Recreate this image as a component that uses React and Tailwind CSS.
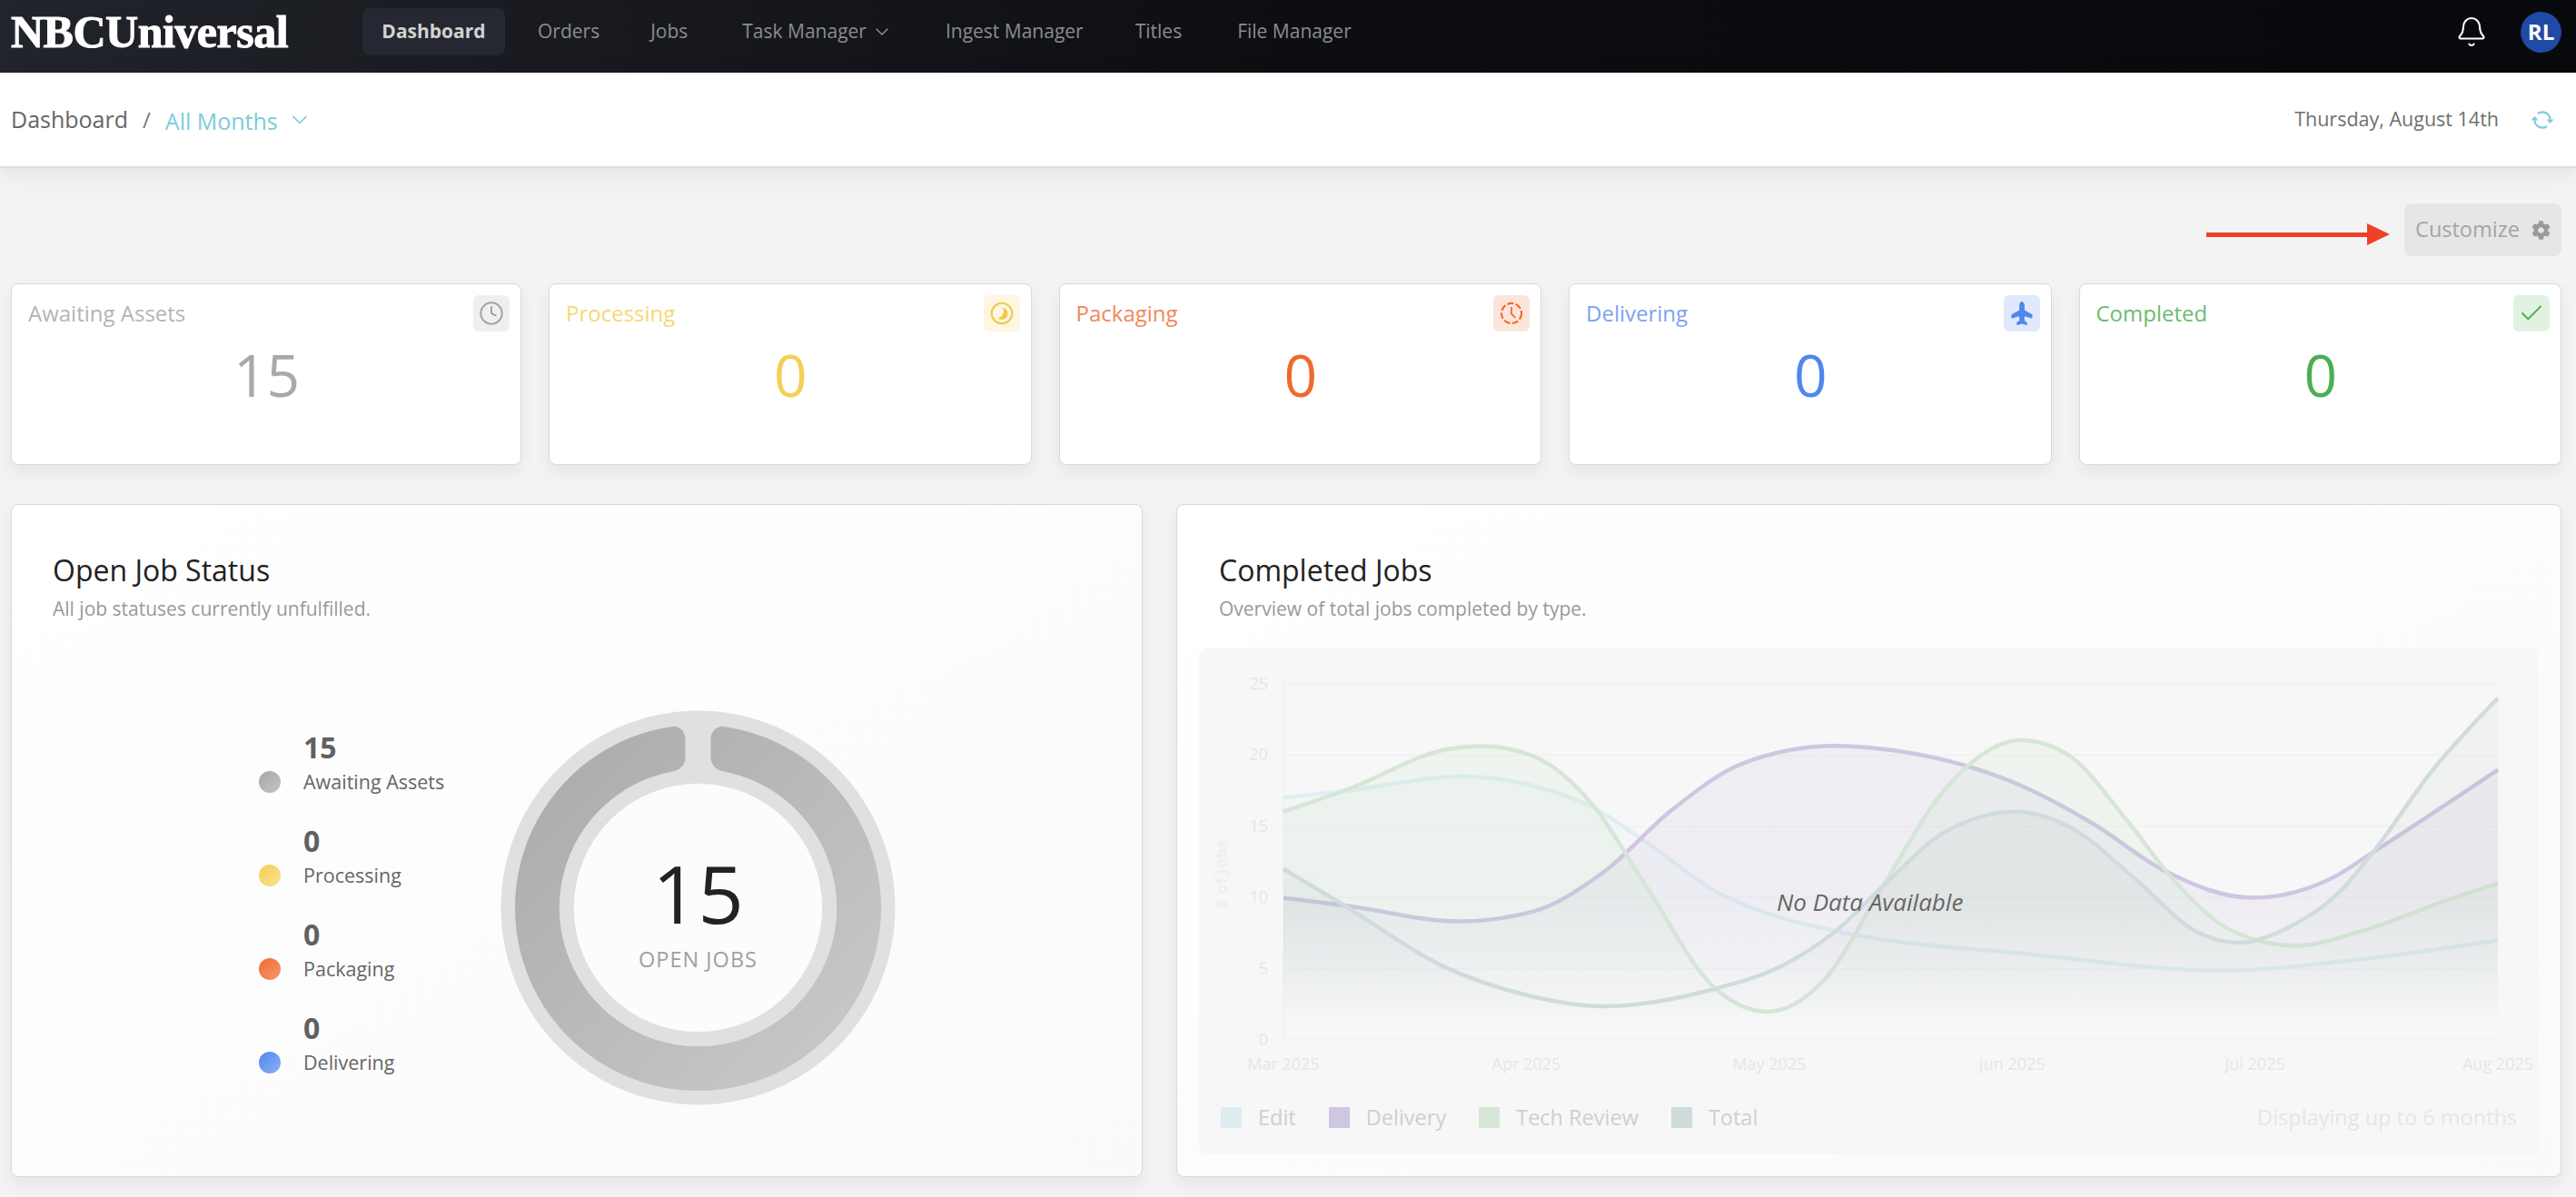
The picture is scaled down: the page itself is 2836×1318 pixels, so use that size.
import React from "react";
import { Bell, ChevronDown, Clock, Check } from "lucide-react";
import { FaCog, FaPlane } from "react-icons/fa";

// monotone curve through the traced points, same as the chart lib draws
const smooth = (pts) => {
  const n = pts.length;
  const h = [];
  const s = [];
  for (let i = 0; i < n - 1; i++) {
    h[i] = pts[i + 1][0] - pts[i][0];
    s[i] = (pts[i + 1][1] - pts[i][1]) / h[i];
  }
  const t = [];
  for (let i = 1; i < n - 1; i++) {
    const p = (s[i - 1] * h[i] + s[i] * h[i - 1]) / (h[i - 1] + h[i]);
    t[i] = (Math.sign(s[i - 1]) + Math.sign(s[i])) * Math.min(Math.abs(s[i - 1]), Math.abs(s[i]), 0.5 * Math.abs(p));
  }
  t[0] = (3 * s[0] - t[1]) / 2;
  t[n - 1] = (3 * s[n - 2] - t[n - 2]) / 2;
  let d = `M${pts[0][0]},${pts[0][1]}`;
  for (let i = 0; i < n - 1; i++) {
    const k = h[i] / 3;
    d += ` C${pts[i][0] + k},${pts[i][1] + k * t[i]} ${pts[i + 1][0] - k},${pts[i + 1][1] - k * t[i + 1]} ${pts[i + 1][0]},${pts[i + 1][1]}`;
  }
  return d;
};

// traced curves, in px from the top left of the plot
const series = [
  {
    id: "edit",
    stroke: "#e0eef2",
    fill: "#bfe3ec",
    alpha: 0.07,
    pts: [[0, 125.6], [71, 117.5], [198.6, 102], [275, 112.2], [341.5, 136.6], [395, 171.2], [479, 230.2], [545.6, 256.7], [606.8, 272], [827, 298.2], [1031, 315.7], [1184, 303.5], [1337, 282.3]],
  },
  {
    id: "delivery",
    stroke: "#cfc6e2",
    fill: "#a08cc8",
    alpha: 0.09,
    pts: [[0, 235.5], [71, 244.5], [193.5, 261.5], [275, 250.6], [351.7, 207.8], [428, 138.6], [505, 87.8], [607, 68.2], [674, 73.5], [817, 114.2], [893, 155], [970, 205.8], [1067, 235.5], [1154, 214], [1199.5, 185.4], [1337, 94.7]],
  },
  {
    id: "tech",
    stroke: "#d5e6d6",
    fill: "#a8d4a8",
    alpha: 0.1,
    pts: [[0, 140.7], [71, 116], [183, 71.5], [219, 68.6], [275, 79.6], [341.5, 134.6], [397.6, 220], [474, 334], [533, 360.9], [591.5, 330], [664, 216], [720, 126.4], [761, 83.7], [812, 62], [863, 77.6], [929, 150.8], [980, 216], [1046.5, 273], [1115, 288.4], [1184, 273], [1286, 236.3], [1337, 220]],
  },
  {
    id: "total",
    stroke: "#d0dcdc",
    fill: "#8f9ca0",
    alpha: 0.07,
    pts: [[0, 203.8], [71, 246.5], [173, 309.6], [265, 342], [351.7, 355], [474, 336], [550.7, 309.6], [607, 273], [663, 220], [725, 165], [806.7, 140.7], [868, 159], [939, 216], [1005.6, 273], [1051.6, 285], [1113, 264.8], [1164, 228], [1199.5, 185.4], [1266, 94], [1337, 15.7]],
  },
];

const stats = [
  { label: "Awaiting Assets", value: 15, title: "text-[#b4b4b4]", num: "text-[#a9a9a9]", box: "bg-[#efefef]", kind: "clock" },
  { label: "Processing", value: 0, title: "text-[#f7d774]", num: "text-[#f5cf55]", box: "bg-[#fdf6e1]", kind: "progress" },
  { label: "Packaging", value: 0, title: "text-[#f2875a]", num: "text-[#ee6a2d]", box: "bg-[#fce5da]", kind: "dashed" },
  { label: "Delivering", value: 0, title: "text-[#7ba3ef]", num: "text-[#4f87ee]", box: "bg-[#e0e9fb]", kind: "plane" },
  { label: "Completed", value: 0, title: "text-[#6dbb70]", num: "text-[#4caf50]", box: "bg-[#e1f1e2]", kind: "check" },
];

const StatIcon = ({ kind }) => {
  if (kind === "clock") return <Clock className="w-[28px] h-[28px] text-[#a3a3a3]" strokeWidth={1.7} />;
  if (kind === "check") return <Check className="w-[30px] h-[30px] text-[#4caf50]" strokeWidth={1.5} />;
  if (kind === "plane") return <FaPlane className="w-[26px] h-[26px] text-[#4f87ee] -rotate-90" />;
  if (kind === "progress") {
    return (
      <svg viewBox="0 0 24 24" className="w-[26px] h-[26px] text-[#f2c94c]" fill="none" stroke="currentColor" strokeWidth="2">
        <circle cx="12" cy="12" r="10.4" />
        <path d="M12.6 6A6.2 6.2 0 1 1 7.8 16.8 7 7 0 0 0 12.6 6z" fill="currentColor" stroke="none" />
      </svg>
    );
  }
  return (
    <svg viewBox="0 0 24 24" className="w-[26px] h-[26px] text-[#ee6a2d]" fill="none" stroke="currentColor" strokeWidth="2">
      <circle cx="12" cy="12" r="10.2" strokeDasharray="6.5 2.2" />
      <path d="M12 6v6.5l3.5 3.5" strokeLinecap="round" strokeWidth="1.6" />
    </svg>
  );
};

const StatCard = ({ s }) => (
  <div className="relative h-[200px] bg-white border border-[#d9d9d9] rounded-lg shadow-[0_8px_18px_rgba(0,0,0,0.06)] pl-[18px] pr-[17px] pt-[16px]">
    <div className={`text-[24px] leading-[32px] ${s.title}`}>{s.label}</div>
    <div className={`text-center text-[64px] leading-[80px] mt-[12px] ${s.num}`}>{s.value}</div>
    <div className={`absolute top-[12px] right-[12px] w-[40px] h-[40px] rounded-md flex items-center justify-center ${s.box}`}>
      <StatIcon kind={s.kind} />
    </div>
  </div>
);

const legend = [
  { label: "Awaiting Assets", value: 15, dot: "from-[#a6a6a6] to-[#c4c4c4]" },
  { label: "Processing", value: 0, dot: "from-[#f5cf55] to-[#f9e08e]" },
  { label: "Packaging", value: 0, dot: "from-[#ee6a2d] to-[#f49a6c]" },
  { label: "Delivering", value: 0, dot: "from-[#4f87ee] to-[#8cb1f5]" },
];

const Donut = () => (
  <div className="relative w-[435px] h-[435px]">
    <svg viewBox="-218 -218 436 436" className="w-full h-full">
      <defs>
        <linearGradient id="ring" x1="0" y1="0" x2="1" y2="1">
          <stop offset="0" stopColor="#a9a9a9" />
          <stop offset="1" stopColor="#cbcbcb" />
        </linearGradient>
      </defs>
      <circle r="217.5" fill="#e0e0e0" />
      <circle r="137" fill="#fcfcfc" />
      <path
        fill="url(#ring)"
        d="M26,-200.3 A202,202 0 1 1 -26,-200.3 Q-14.5,-198 -14,-186 L-14,-166 Q-14,-155 -26,-150.8 A153,153 0 1 0 26,-150.8 Q14,-155 14,-166 L14,-186 Q14.5,-198 26,-200.3 Z"
      />
    </svg>
    <div className="absolute inset-0 flex flex-col items-center justify-center">
      <div className="text-[88px] leading-[100px] text-[#222] mt-[5px]">15</div>
      <div className="text-[23.5px] leading-[30px] tracking-[1px] text-[#a0a0a0] mt-[8px]">OPEN JOBS</div>
    </div>
  </div>
);

const Chart = () => {
  const w = 1337;
  const h = 392;
  const months = ["Mar 2025", "Apr 2025", "May 2025", "Jun 2025", "Jul 2025", "Aug 2025"];
  return (
    <div className="relative mt-[30px] mx-[24px] h-[557px] bg-[#f7f7f7] rounded-lg">
      <svg width="1475" height="490" viewBox="-93 -39 1475 490" className="block" fontFamily="'Open Sans', sans-serif">
        <defs>
          {series.map((s) => (
            <linearGradient key={s.id} id={`grad-${s.id}`} gradientUnits="userSpaceOnUse" x1="0" y1="0" x2="0" y2={h}>
              <stop offset="0" stopColor={s.fill} stopOpacity={s.alpha} />
              <stop offset="0.62" stopColor={s.fill} stopOpacity={s.alpha} />
              <stop offset="0.96" stopColor={s.fill} stopOpacity="0" />
            </linearGradient>
          ))}
        </defs>
        {[0, 1, 2, 3, 4, 5].map((i) => (
          <g key={i}>
            <line x1="0" x2={w} y1={(h / 5) * i} y2={(h / 5) * i} stroke="#f1f1f1" strokeWidth="1.5" />
            <text x="-17" y={(h / 5) * i + 6} textAnchor="end" fontSize="18" fill="#e6e6e6">{25 - i * 5}</text>
          </g>
        ))}
        <line x1="0" x2="0" y1="0" y2={h} stroke="#f0f0f0" strokeWidth="1.5" />
        {series.map((s) => {
          const line = smooth(s.pts);
          return (
            <g key={s.id}>
              <path d={`${line} L${w},${h} L0,${h} Z`} fill={`url(#grad-${s.id})`} />
              <path d={line} fill="none" stroke={s.stroke} strokeWidth="4.5" />
            </g>
          );
        })}
        {months.map((m, i) => (
          <text key={m} x={(w / 5) * i} y={h + 33} textAnchor="middle" fontSize="18" fill="#e6e6e6">{m}</text>
        ))}
        <text transform="translate(-62,210) rotate(-90)" textAnchor="middle" fontSize="18" fontWeight="700" fill="#efefef"># of Jobs</text>
      </svg>
      <div className="flex items-center justify-between pl-[24px] pr-[24px] mt-[11px]">
        <div className="flex items-center text-[23.5px] leading-[30px] text-[#cfcfcf]">
          <span className="w-[23px] h-[23px] bg-[#dfedf1] mr-[18px]" />
          <span className="mr-[36px]">Edit</span>
          <span className="w-[23px] h-[23px] bg-[#cfc6e2] mr-[18px]" />
          <span className="mr-[36px]">Delivery</span>
          <span className="w-[23px] h-[23px] bg-[#d6e7d7] mr-[18px]" />
          <span className="mr-[36px]">Tech Review</span>
          <span className="w-[23px] h-[23px] bg-[#d0dcdc] mr-[18px]" />
          <span>Total</span>
        </div>
        <div className="text-[23.5px] leading-[30px] text-[#e6e6e6]">Displaying up to 6 months</div>
      </div>
      <div className="absolute left-[636px] top-[264px] text-[26px] leading-[30px] italic text-[#666] whitespace-nowrap">No Data Available</div>
    </div>
  );
};

const SyncIcon = () => (
  <svg viewBox="0 0 26 20" className="w-[26px] h-[20px] ml-[35px] text-[#7ccbdc]" fill="none" stroke="currentColor" strokeWidth="2.2">
    <path d="M8 3A8.5 8.5 0 0 1 21.5 9.5" />
    <path d="M18 17A8.5 8.5 0 0 1 4.5 10.5" />
    <path d="M17.5 9.5h8L21.5 14z" fill="currentColor" stroke="none" />
    <path d="M0.5 10.5h8L4.5 6z" fill="currentColor" stroke="none" />
  </svg>
);

export default function App() {
  return (
    <div className="relative min-h-[1318px] bg-[#f3f3f3] font-['Open_Sans',sans-serif] overflow-hidden">
      <header className="h-[80px] bg-gradient-to-r from-[#22242b] via-[#0c0e12] to-[#07090c] flex items-center pl-[12px] pr-[16px] pb-[10px]">
        <div className="w-[387px] font-['Liberation_Serif',serif] font-bold text-white text-[50px] leading-[70px] tracking-[-0.5px] [-webkit-text-stroke:1px_white]">NBCUniversal</div>
        <div className="h-[52px] w-[157px] rounded-lg bg-[#252731] flex items-center justify-center text-[21px] font-bold text-[#d2d2d2]">Dashboard</div>
        <nav className="flex items-center text-[21px] text-[#8c8c8c]">
          <span className="ml-[36px]">Orders</span>
          <span className="ml-[56px]">Jobs</span>
          <span className="ml-[60px] flex items-center">
            Task Manager
            <ChevronDown className="w-[24px] h-[24px] ml-[5px]" strokeWidth={1.5} />
          </span>
          <span className="ml-[58px]">Ingest Manager</span>
          <span className="ml-[57px]">Titles</span>
          <span className="ml-[61px]">File Manager</span>
        </nav>
        <div className="ml-auto flex items-center">
          <Bell className="w-[36px] h-[36px] text-white mr-[36px]" strokeWidth={1.4} />
          <div className="w-[45px] h-[45px] rounded-full bg-[#1f4aa5] flex items-center justify-center text-white font-bold text-[24px]">RL</div>
        </div>
      </header>

      <div className="h-[105px] bg-white border-b-2 border-[#dcdcdc] shadow-[0_6px_24px_rgba(0,0,0,0.07)] flex items-center pl-[12px] pr-[24px]">
        <span className="text-[25px] text-[#666]">Dashboard</span>
        <span className="text-[24px] text-[#777] ml-[16px]">/</span>
        <span className="text-[25px] text-[#7ccbdc] ml-[16px] mt-[5px]">All Months</span>
        <ChevronDown className="w-[28px] h-[28px] text-[#7ccbdc] ml-[10px]" strokeWidth={1.5} />
        <span className="ml-auto text-[21.5px] text-[#6f6f6f]">Thursday, August 14th</span>
        <SyncIcon />
      </div>

      <div className="pl-[12px] pr-[16px] pt-[39px]">
        <div className="flex justify-end">
          <div className="w-[173px] h-[58px] rounded-lg bg-[#e6e6e6] flex items-center justify-center text-[23.5px] text-[#a4a4a4]">
            Customize
            <FaCog className="w-[21px] h-[21px] ml-[13px] text-[#9a9a9a]" />
          </div>
        </div>

        <div className="grid grid-cols-[562px_repeat(4,1fr)] gap-x-[30px] mt-[30px]">
          {stats.map((s) => (
            <StatCard key={s.label} s={s} />
          ))}
        </div>

        <div className="grid grid-cols-[1246px_1fr] gap-x-[37px] mt-[43px]">
          <section className="h-[741px] border border-[#d9d9d9] rounded-lg bg-gradient-to-br from-white to-[#fafafa] shadow-[0_8px_18px_rgba(0,0,0,0.06)]">
            <div className="pl-[45px] pt-[52px]">
              <h2 className="text-[32px] leading-[40px] text-[#222]">Open Job Status</h2>
              <p className="text-[21px] leading-[28px] text-[#999] mt-[8px]">All job statuses currently unfulfilled.</p>
            </div>
            <div className="flex items-center mt-[98px] pl-[272px]">
              <div className="w-[266px] flex flex-col gap-y-[27px] mb-[8px]">
                {legend.map((l) => (
                  <div key={l.label} className="flex">
                    <span className={`w-[24px] h-[24px] rounded-full bg-gradient-to-br mt-[46px] mr-[25px] ${l.dot}`} />
                    <div>
                      <div className="text-[32px] leading-[40px] font-bold text-[#606060]">{l.value}</div>
                      <div className="text-[21.5px] leading-[36px] text-[#666]">{l.label}</div>
                    </div>
                  </div>
                ))}
              </div>
              <Donut />
            </div>
          </section>

          <section className="h-[741px] border border-[#d9d9d9] rounded-lg bg-gradient-to-br from-white to-[#fafafa] shadow-[0_8px_18px_rgba(0,0,0,0.06)]">
            <div className="pl-[46px] pt-[52px]">
              <h2 className="text-[32px] leading-[40px] text-[#222]">Completed Jobs</h2>
              <p className="text-[21px] leading-[28px] text-[#999] mt-[8px]">Overview of total jobs completed by type.</p>
            </div>
            <Chart />
          </section>
        </div>
      </div>

      {/* annotation arrow pasted over the screenshot */}
      <div className="absolute left-[2429px] top-[246px] flex items-center">
        <div className="w-[177px] h-[5px] bg-[#ee4125]" />
        <div className="w-0 h-0 border-y-[12px] border-y-transparent border-l-[25px] border-l-[#ee4125]" />
      </div>
    </div>
  );
}
